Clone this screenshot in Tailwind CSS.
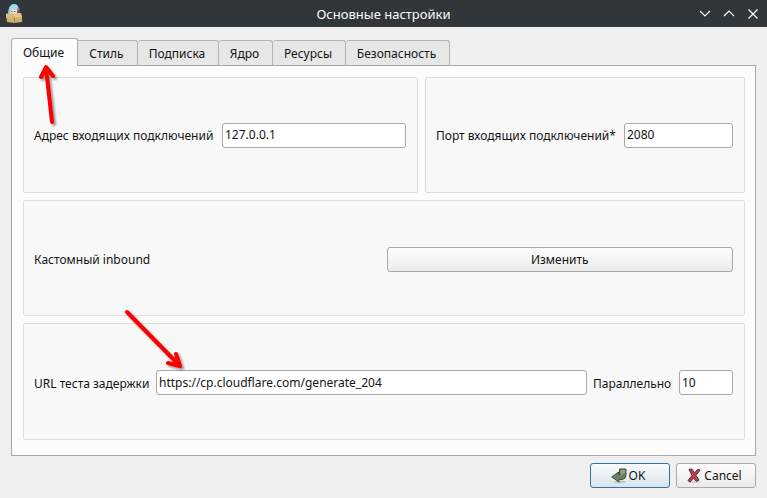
<!DOCTYPE html>
<html lang="ru">
<head>
    <meta charset="UTF-8">
    <meta name="viewport" content="width=device-width, initial-scale=1.0">
    <title>Основные настройки</title>
    <script src="https://cdn.jsdelivr.net/npm/@tailwindcss/browser@4"></script>
</head>
<body class="bg-[#efefef] font-['Noto_Sans',sans-serif] text-[12px] leading-[18px] text-[#141414]">
    <div class="relative flex min-h-screen flex-col">
        <!-- Title bar -->
        <header class="grid h-[27px] grid-cols-[80px_1fr_80px] items-center bg-[#31363b] text-[#fcfcfc]">
            <svg class="ml-[5px] h-5 w-[18px]" viewBox="0 0 18 20">
                <path d="M3 11C3 4 5 0 9 0s6 4 5 11z" fill="#8ccbe3"/>
                <path d="M13 3l2 1-1 6-2-1z" fill="#7a4a50"/>
                <path d="M5 6l4-2 3 2v4H5z" fill="#f5dcd8"/>
                <path d="M4 4l4-4 4 1 2 5-3-2-2 2-2-1-2 3z" fill="#9ed9ec"/>
                <path d="M6 7.500h1.500M9 7.500h1.500" stroke="#a54c58"/>
                <path d="M1 10l3-1 5 1 6-1 2 4v5l-8 1-7-1z" fill="#cdb06c"/>
                <path d="M9 10l7-1 1 4-7 1z" fill="#dfc88c"/>
                <path d="M1 10l7-1 2 4-9 1z" fill="#d6bd7c"/>
                <path d="M9.500 13.500v5" stroke="#a98449"/>
            </svg>
            <h1 class="text-center text-[13px]">Основные настройки</h1>
            <div class="flex justify-end gap-3 pr-2">
                <button aria-label="Свернуть"><svg class="size-3" viewBox="0 0 12 12" fill="none" stroke="#fcfcfc" stroke-width="1.2"><path d="M1 3l5 5 5-5"/></svg></button>
                <button aria-label="Развернуть"><svg class="size-3" viewBox="0 0 12 12" fill="none" stroke="#fcfcfc" stroke-width="1.2"><path d="M1 8l5-5 5 5"/></svg></button>
                <button aria-label="Закрыть"><svg class="size-3" viewBox="0 0 12 12" fill="none" stroke="#fcfcfc" stroke-width="1.2"><path d="M1.500 1.500l9 9M10.500 1.500l-9 9"/></svg></button>
            </div>
        </header>

        <main class="flex flex-1 flex-col px-[11px] pt-[11px]">
            <!-- Tabs -->
            <div role="tablist" class="z-10 -mb-px flex items-end">
                <button role="tab" aria-selected="true" class="h-7 w-[67px] rounded-t-[3px] border border-b-0 border-[#adadad] bg-[#fcfcfc] pr-0.5">Общие</button>
                <button role="tab" class="h-[26px] w-[60px] rounded-tr-[3px] border border-l-0 border-[#b4b4b4] border-b-[#a5a5a5] bg-[#e7e7e7] pt-0.5 pr-0.5">Стиль</button>
                <button role="tab" class="h-[26px] w-[81px] rounded-t-[3px] border border-l-0 border-[#b4b4b4] border-b-[#a5a5a5] bg-[#e7e7e7] pt-0.5 pr-0.5">Подписка</button>
                <button role="tab" class="h-[26px] w-[54px] rounded-t-[3px] border border-l-0 border-[#b4b4b4] border-b-[#a5a5a5] bg-[#e7e7e7] pt-0.5 pr-0.5">Ядро</button>
                <button role="tab" class="h-[26px] w-[73px] rounded-t-[3px] border border-l-0 border-[#b4b4b4] border-b-[#a5a5a5] bg-[#e7e7e7] pt-0.5 pr-0.5">Ресурсы</button>
                <button role="tab" class="h-[26px] w-[104px] rounded-t-[3px] border border-l-0 border-[#b4b4b4] border-b-[#a5a5a5] bg-[#e7e7e7] pt-0.5 pr-0.5">Безопасность</button>
            </div>

            <section role="tabpanel" class="flex flex-1 flex-col gap-[7px] border border-[#a9a9a9] bg-[#fcfcfc] pt-[11px] pr-[10px] pb-[15px] pl-[11px]">
                <div class="grid flex-1 grid-cols-[minmax(0,395fr)_minmax(0,320fr)] gap-[7px]">
                    <div class="flex items-center gap-1.5 rounded-xs border border-[#dedede] bg-[#f8f8f8] pt-px pr-[11px] pl-[10px]">
                        <label for="address" class="w-[182px] shrink-0 pt-0.5">Адрес входящих подключений</label>
                        <input id="address" type="text" value="127.0.0.1" class="h-[25px] min-w-0 flex-1 rounded-[3px] border border-[#a9a9a9] bg-white px-0.5 pb-px">
                    </div>
                    <div class="flex items-center gap-1.5 rounded-xs border border-[#dedede] bg-[#f8f8f8] pt-px pr-[11px] pl-[10px]">
                        <label for="port" class="w-[182px] shrink-0 pt-0.5">Порт входящих подключений*</label>
                        <input id="port" type="text" value="2080" class="h-[25px] min-w-0 flex-1 rounded-[3px] border border-[#a9a9a9] bg-white px-0.5 pb-px">
                    </div>
                </div>
                <div class="grid flex-1 grid-cols-2 items-center gap-1.5 rounded-xs border border-[#dedede] bg-[#f8f8f8] pt-0.5 pr-[11px] pl-[10px]">
                    <span class="pt-px">Кастомный inbound</span>
                    <button class="h-[25px] rounded-[3px] border border-[#a9a9a9] bg-linear-to-b from-[#fcfcfc] to-[#ebebeb] pt-px">Изменить</button>
                </div>
                <div class="flex flex-1 items-center gap-1.5 rounded-xs border border-[#dedede] bg-[#f8f8f8] pt-0.5 pr-[11px] pl-[10px]">
                    <label for="url" class="w-[116px] shrink-0 pt-0.5">URL теста задержки</label>
                    <input id="url" type="text" value="https://cp.cloudflare.com/generate_204" class="h-[25px] min-w-0 flex-1 rounded-[3px] border border-[#a9a9a9] bg-white px-0.5 pb-px">
                    <label for="parallel" class="w-20 shrink-0 pt-0.5">Параллельно</label>
                    <input id="parallel" type="text" value="10" class="h-[25px] w-[54px] rounded-[3px] border border-[#a9a9a9] bg-white px-0.5 pb-px">
                </div>
            </section>
        </main>

        <footer class="flex justify-end gap-1.5 px-[11px] pt-[7px] pb-2.5">
            <button class="flex h-[25px] w-20 items-center justify-center gap-0.5 rounded-[3px] border border-[#2f74a3] bg-linear-to-b from-[#fafcfd] to-[#dae3e9] pr-1">
                <svg class="size-4" viewBox="0 0 16 16">
                    <ellipse cx="9" cy="14" rx="6" ry="1.500" fill="#000" opacity=".15"/>
                    <path d="M8.500 1h6.500v6q0 4-4 4.500H8V14L.7 9 7.500 4v2.500h1z" fill="#6f8060" stroke="#40503a" stroke-linejoin="round"/>
                    <path d="M9.500 2h4.500V5l-4 2z" fill="#95a284"/>
                </svg>
                OK
            </button>
            <button class="flex h-[25px] w-20 items-center justify-center gap-0.5 rounded-[3px] border border-[#a9a9a9] bg-linear-to-b from-[#fcfcfc] to-[#ebebeb] pr-1">
                <svg class="size-4" viewBox="0 0 16 16">
                    <ellipse cx="8" cy="14" rx="6" ry="1.500" fill="#000" opacity=".12"/>
                    <path d="M3 1.500l3-.5 2.500 4L11.500 1.500l2.500.5-4 5.500 3 4.500-2.500 1.500L7.500 10l-3.500 4-2-1.500 4-5z" fill="#b8424f" stroke="#5f2a31" stroke-linejoin="round"/>
                </svg>
                Cancel
            </button>
        </footer>

        <!-- Pointer arrows -->
        <svg class="pointer-events-none absolute top-0 left-0 z-20 h-[380px] w-[200px] drop-shadow-[2px_2px_1px_rgb(0_0_0/0.4)]" viewBox="0 0 200 380" fill="none" stroke="#fe0000" stroke-width="4" stroke-linecap="round" stroke-linejoin="round">
            <path d="M52 122L46 68M41 77l5-10 7 9"/>
            <path d="M127 312l52 53M176 354l4 12-12-3"/>
        </svg>
    </div>
</body>
</html>
